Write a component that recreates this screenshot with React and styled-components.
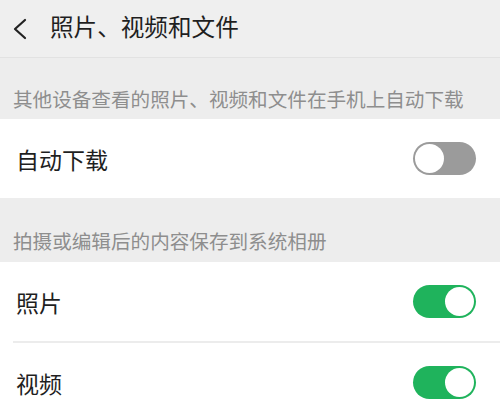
import React from "react";
import styled, { createGlobalStyle } from "styled-components";

const Global = createGlobalStyle`
  html, body { margin: 0; padding: 0; background: #ededed; }
  body { font-family: "Noto Sans CJK SC", "Noto Sans", sans-serif; }
  * { box-sizing: border-box; }
`;

const Page = styled.div`
  width: 500px;
  height: 413px;
  overflow: hidden;
  background: #ededed;
`;

const Header = styled.div`
  height: 58px;
  display: flex;
  align-items: center;
  gap: 22px;
  padding-left: 12px;
  background: #efefef;
  border-bottom: 1px solid #e2e2e2;
`;

const Title = styled.div`
  font-size: 23.6px;
  color: #1f1f1f;
  line-height: 1;
  padding-bottom: 4px;
`;

const SectionLabel = styled.div`
  height: ${p => p.$h}px;
  padding: ${p => p.$pt}px 0 0 13px;
  font-size: 19.6px;
  line-height: 22px;
  color: #8e8e8e;
  white-space: nowrap;
`;

const Group = styled.div`
  background: #ffffff;
`;

const Row = styled.div`
  height: 79px;
  display: flex;
  align-items: center;
  justify-content: space-between;
  padding: 0 24px 0 16px;
  font-size: 23px;
  color: #1f1f1f;
`;

const Divider = styled.div`
  height: 2px;
  margin-left: 13px;
  background: #ececec;
`;

const Track = styled.div`
  width: 63px;
  height: 33px;
  border-radius: 17px;
  background: ${p => (p.$on ? "#1fb35c" : "#9b9b9b")};
  display: flex;
  align-items: center;
  justify-content: ${p => (p.$on ? "flex-end" : "flex-start")};
  padding: 2px;
`;

const Knob = styled.div`
  width: 29px;
  height: 29px;
  border-radius: 50%;
  background: #ffffff;
`;

const Toggle = ({ on }) => (
  <Track $on={on}>
    <Knob />
  </Track>
);

export default function App() {
  return (
    <Page>
      <Global />
      <Header>
        <svg width="16" height="24" viewBox="0 0 16 24">
          <polyline points="13,3 3,12 13,21" fill="none" stroke="#222" strokeWidth="2.2" strokeLinecap="round" strokeLinejoin="round" />
        </svg>
        <Title>照片、视频和文件</Title>
      </Header>
      <SectionLabel $h={61} $pt={30}>其他设备查看的照片、视频和文件在手机上自动下载</SectionLabel>
      <Group>
        <Row>
          <span>自动下载</span>
          <Toggle on={false} />
        </Row>
      </Group>
      <SectionLabel $h={64} $pt={32}>拍摄或编辑后的内容保存到系统相册</SectionLabel>
      <Group>
        <Row>
          <span>照片</span>
          <Toggle on />
        </Row>
        <Divider />
        <Row>
          <span>视频</span>
          <Toggle on />
        </Row>
      </Group>
    </Page>
  );
}
